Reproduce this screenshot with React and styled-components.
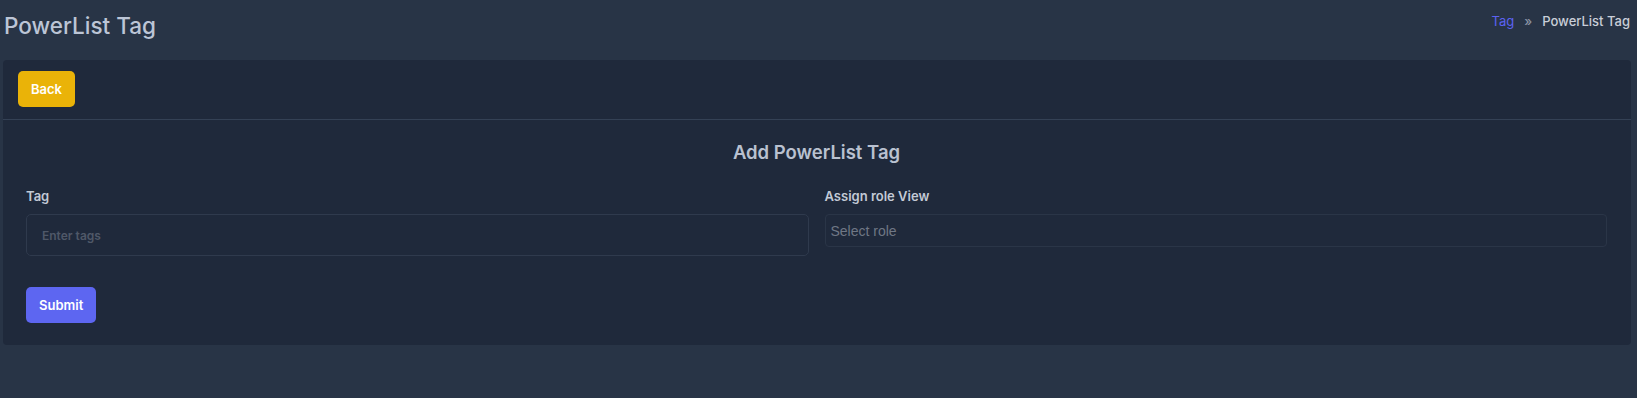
import React from 'react';
import styled, { createGlobalStyle } from 'styled-components';

const GlobalStyle = createGlobalStyle`
    body {
        margin: 0;
        background-color: #283446;
        font-family: Inter, "Noto Sans", sans-serif;
    }
`

const Page = styled.div`
    min-height: 398px;
    padding: 7px 6px 0 3px;
    box-sizing: border-box;
`

const PageHeader = styled.div`
    display: flex;
    align-items: center;
    justify-content: space-between;
    height: 36px;
    margin-bottom: 17px;
`

const PageTitle = styled.h1`
    margin: 0 0 0 1px;
    font-size: 22.5px;
    font-weight: 500;
    color: #bcc5d6;
`

const Breadcrumb = styled.nav`
    align-self: flex-start;
    margin-top: 4px;
    display: flex;
    align-items: center;
    gap: 10px;
    font-size: 13px;
    line-height: 20px;
    font-weight: 500;
    color: #c9ced8;
    padding-right: 1px;
`

const CrumbLink = styled.a`
    color: #5c62f2;
    font-weight: 400;
    text-decoration: none;
`

const CrumbSep = styled.span`
    color: #8a93a4;
`

const Card = styled.div`
    background-color: #1f293b;
    border-radius: 4px;
`

const CardHeader = styled.div`
    padding: 11px 14px 12px 15px;
    border-bottom: 1px solid #344155;
`

const Button = styled.button`
    height: 36px;
    padding: 0 13px;
    border: none;
    border-radius: 5px;
    background-color: ${p => p.$color};
    color: #ffffff;
    font-family: Inter, sans-serif;
    font-size: 13px;
    font-weight: 600;
    cursor: pointer;
`

const CardBody = styled.div`
    padding: 18px 24px 22px 23px;
`

const FormTitle = styled.h2`
    margin: 0 0 20px 0;
    text-align: center;
    font-size: 18.5px;
    font-weight: 600;
    color: #b9c1d0;
    line-height: 28px;
`

const FieldGrid = styled.div`
    display: grid;
    grid-template-columns: 1fr 1fr;
    column-gap: 16px;
    align-items: start;
`

const Field = styled.div`
    display: flex;
    flex-direction: column;
`

const Label = styled.label`
    font-size: 13px;
    font-weight: 600;
    color: #c3cad6;
    line-height: 20px;
    margin-bottom: 8px;
`

const TextInput = styled.input`
    height: 42px;
    box-sizing: border-box;
    padding: 0 15px;
    background-color: #1f293b;
    border: 1px solid #2f3a4d;
    border-radius: 5px;
    color: #c3cad6;
    font-family: Inter, sans-serif;
    font-size: 12px;
    font-weight: 600;
    outline: none;
    &::placeholder {
        color: #4f5868;
    }
`

const SelectBox = styled.div`
    height: 33px;
    box-sizing: border-box;
    display: flex;
    align-items: center;
    padding: 0 5px;
    background-color: #1f293b;
    border: 1px solid #2a3547;
    border-radius: 4px;
    color: #6f7785;
    font-family: "Liberation Sans", Arial, sans-serif;
    font-size: 14px;
`

const Actions = styled.div`
    margin-top: 31px;
    display: flex;
`

const App = () => (
    <>
        <GlobalStyle />
        <Page>
            <PageHeader>
                <PageTitle>PowerList Tag</PageTitle>
                <Breadcrumb>
                    <CrumbLink href="#">Tag</CrumbLink>
                    <CrumbSep>»</CrumbSep>
                    <span>PowerList Tag</span>
                </Breadcrumb>
            </PageHeader>
            <Card>
                <CardHeader>
                    <Button $color="#eab308">Back</Button>
                </CardHeader>
                <CardBody>
                    <FormTitle>Add PowerList Tag</FormTitle>
                    <FieldGrid>
                        <Field>
                            <Label>Tag</Label>
                            <TextInput placeholder="Enter tags" />
                        </Field>
                        <Field>
                            <Label>Assign role View</Label>
                            <SelectBox>Select role</SelectBox>
                        </Field>
                    </FieldGrid>
                    <Actions>
                        <Button $color="#5d66f1">Submit</Button>
                    </Actions>
                </CardBody>
            </Card>
        </Page>
    </>
)

export default App
